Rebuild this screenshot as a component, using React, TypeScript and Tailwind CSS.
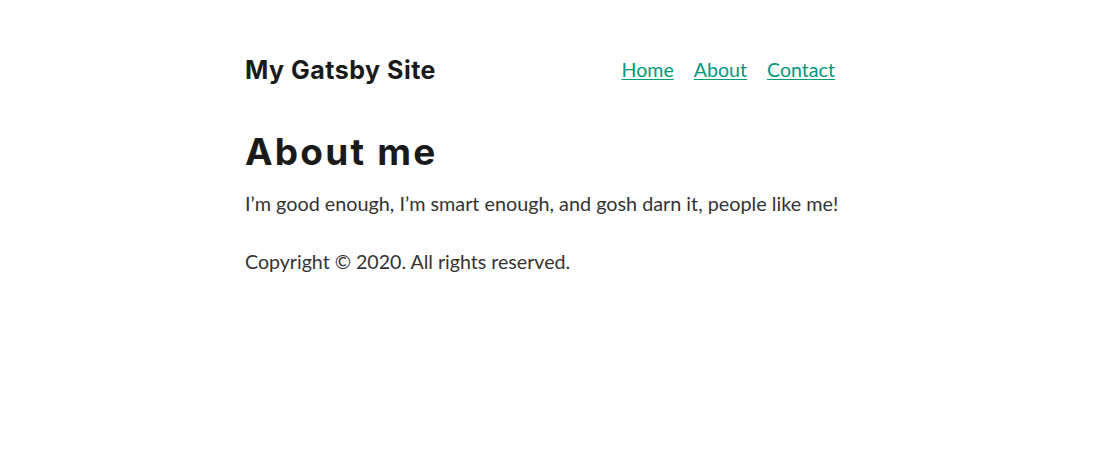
export default function App() {
  return (
    <div className="min-h-[458px] bg-white">
      <div className="ml-[245px] w-[620px] pt-[52px]">
        <header className="flex w-[590px] items-baseline justify-between">
          <h3 className="text-[25px] leading-[36px] font-bold tracking-[0.5px] text-[#1a1a1a]" style={{ fontFamily: 'Inter, sans-serif' }}>
            My Gatsby Site
          </h3>
          <ul className="flex -translate-y-[2px] gap-5 text-[19.6px] leading-[30px]" style={{ fontFamily: 'Lato, sans-serif' }}>
            <li><a href="#" className="text-[#00997a] underline underline-offset-[2px] decoration-1">Home</a></li>
            <li><a href="#" className="text-[#00997a] underline underline-offset-[2px] decoration-1">About</a></li>
            <li><a href="#" className="text-[#00997a] underline underline-offset-[2px] decoration-1">Contact</a></li>
          </ul>
        </header>
        <h1 className="mt-[40px] text-[37px] leading-[48px] font-bold tracking-[2.2px] text-[#1a1a1a]" style={{ fontFamily: 'Inter, sans-serif' }}>
          About me
        </h1>
        <div className="text-[19.8px] leading-[30px] text-[#333]" style={{ fontFamily: 'Lato, sans-serif' }}>
          <p className="mt-[12px]">I’m good enough, I’m smart enough, and gosh darn it, people like me!</p>
          <p className="mt-[29px] text-[19.6px]">Copyright © 2020. All rights reserved.</p>
        </div>
      </div>
    </div>
  );
}
